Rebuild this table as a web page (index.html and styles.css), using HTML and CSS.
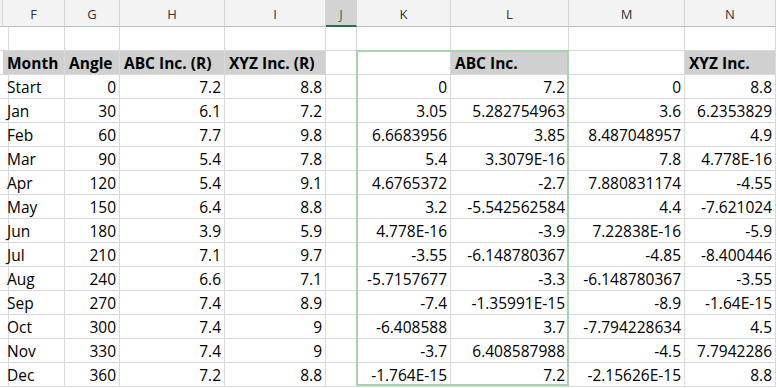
FILE: index.html
```html
<!DOCTYPE html>
<html lang="en">
<head>
  <meta charset="UTF-8">
  <title>Sheet</title>
  <link rel="stylesheet" href="styles.css">
</head>
<body>
  <div class="sheet">
    <div class="grid" id="cells">
      <div class="col-head edge"></div>
      <div class="col-head">F</div>
      <div class="col-head">G</div>
      <div class="col-head">H</div>
      <div class="col-head">I</div>
      <div class="col-head active">J</div>
      <div class="col-head">K</div>
      <div class="col-head">L</div>
      <div class="col-head">M</div>
      <div class="col-head">N</div>
    </div>
    <div class="grid overlay">
      <div class="selection"></div>
    </div>
  </div>

  <script>
    const rows = [
      ['', '', '', '', '', '', '', '', ''],
      ['Month', 'Angle', 'ABC Inc. (R)', 'XYZ Inc. (R)', '', '', 'ABC Inc.', '', 'XYZ Inc.'],
      ['Start', 0, 7.2, 8.8, '', 0, 7.2, 0, 8.8],
      ['Jan', 30, 6.1, 7.2, '', 3.05, 5.282754963, 3.6, 6.2353829],
      ['Feb', 60, 7.7, 9.8, '', 6.6683956, 3.85, 8.487048957, 4.9],
      ['Mar', 90, 5.4, 7.8, '', 5.4, '3.3079E-16', 7.8, '4.778E-16'],
      ['Apr', 120, 5.4, 9.1, '', 4.6765372, -2.7, 7.880831174, -4.55],
      ['May', 150, 6.4, 8.8, '', 3.2, -5.542562584, 4.4, -7.621024],
      ['Jun', 180, 3.9, 5.9, '', '4.778E-16', -3.9, '7.22838E-16', -5.9],
      ['Jul', 210, 7.1, 9.7, '', -3.55, -6.148780367, -4.85, -8.400446],
      ['Aug', 240, 6.6, 7.1, '', -5.7157677, -3.3, -6.148780367, -3.55],
      ['Sep', 270, 7.4, 8.9, '', -7.4, '-1.35991E-15', -8.9, '-1.64E-15'],
      ['Oct', 300, 7.4, 9, '', -6.408588, 3.7, -7.794228634, 4.5],
      ['Nov', 330, 7.4, 9, '', -3.7, 6.408587988, -4.5, 7.7942286],
      ['Dec', 360, 7.2, 8.8, '', '-1.764E-15', 7.2, '-2.15626E-15', 8.8]
    ];
    // columns of the header row that carry the grey fill
    const filled = [0, 1, 2, 3, 6, 8];

    const sheet = document.getElementById('cells');

    rows.forEach((row, r) => {
      const edge = document.createElement('div');
      edge.className = 'cell edge';
      sheet.appendChild(edge);

      row.forEach((value, c) => {
        const cell = document.createElement('div');
        cell.className = 'cell';
        if (r === 1) {
          cell.classList.add('title');
          if (filled.includes(c)) cell.classList.add('fill');
        } else if (c > 0 && value !== '') {
          cell.classList.add('num');
        }
        cell.innerText = value;
        sheet.appendChild(cell);
      });
    });
  </script>
</body>
</html>
```

FILE: styles.css
```css
* { box-sizing: border-box; }

body {
  margin: 0;
  background: #fff;
  font-family: 'Open Sans', 'Noto Sans', sans-serif;
  color: #000;
}

.sheet {
  display: grid;
  width: 776px;
  height: 388px;
  overflow: hidden;
}

.grid {
  grid-area: 1 / 1;
  display: grid;
  grid-template-columns: 3px 62px 55px 105px 101px 31px 94px 118px 116px 91px;
  grid-template-rows: 27px repeat(15, 24px);
}

.overlay {
  pointer-events: none;
}

.col-head {
  background: #f3f3f3;
  border-right: 1px solid #d6d6d6;
  border-bottom: 1px solid #bcbcbc;
  display: flex;
  align-items: center;
  justify-content: center;
  font-size: 13px;
  color: #333;
  padding-top: 2px;
}

.col-head.active {
  background: #d3d3d3;
  color: #217346;
  border-bottom: 2px solid #217346;
}

.cell {
  border-right: 1px solid #dadada;
  border-bottom: 1px solid #dadada;
  display: flex;
  align-items: center;
  padding: 1px 4px 0 4px;
  font-size: 15.5px;
  white-space: nowrap;
  overflow: hidden;
}

.cell.num {
  justify-content: flex-end;
  padding-right: 3px;
}

.cell.title {
  font-weight: 700;
}

.cell.fill {
  background: #d0d0d0;
}

.selection {
  grid-column: 7 / 9;
  grid-row: 3 / 17;
  border: 2px solid #a9d3ae;
  margin: -1px 0 1px -1px;
}
```
